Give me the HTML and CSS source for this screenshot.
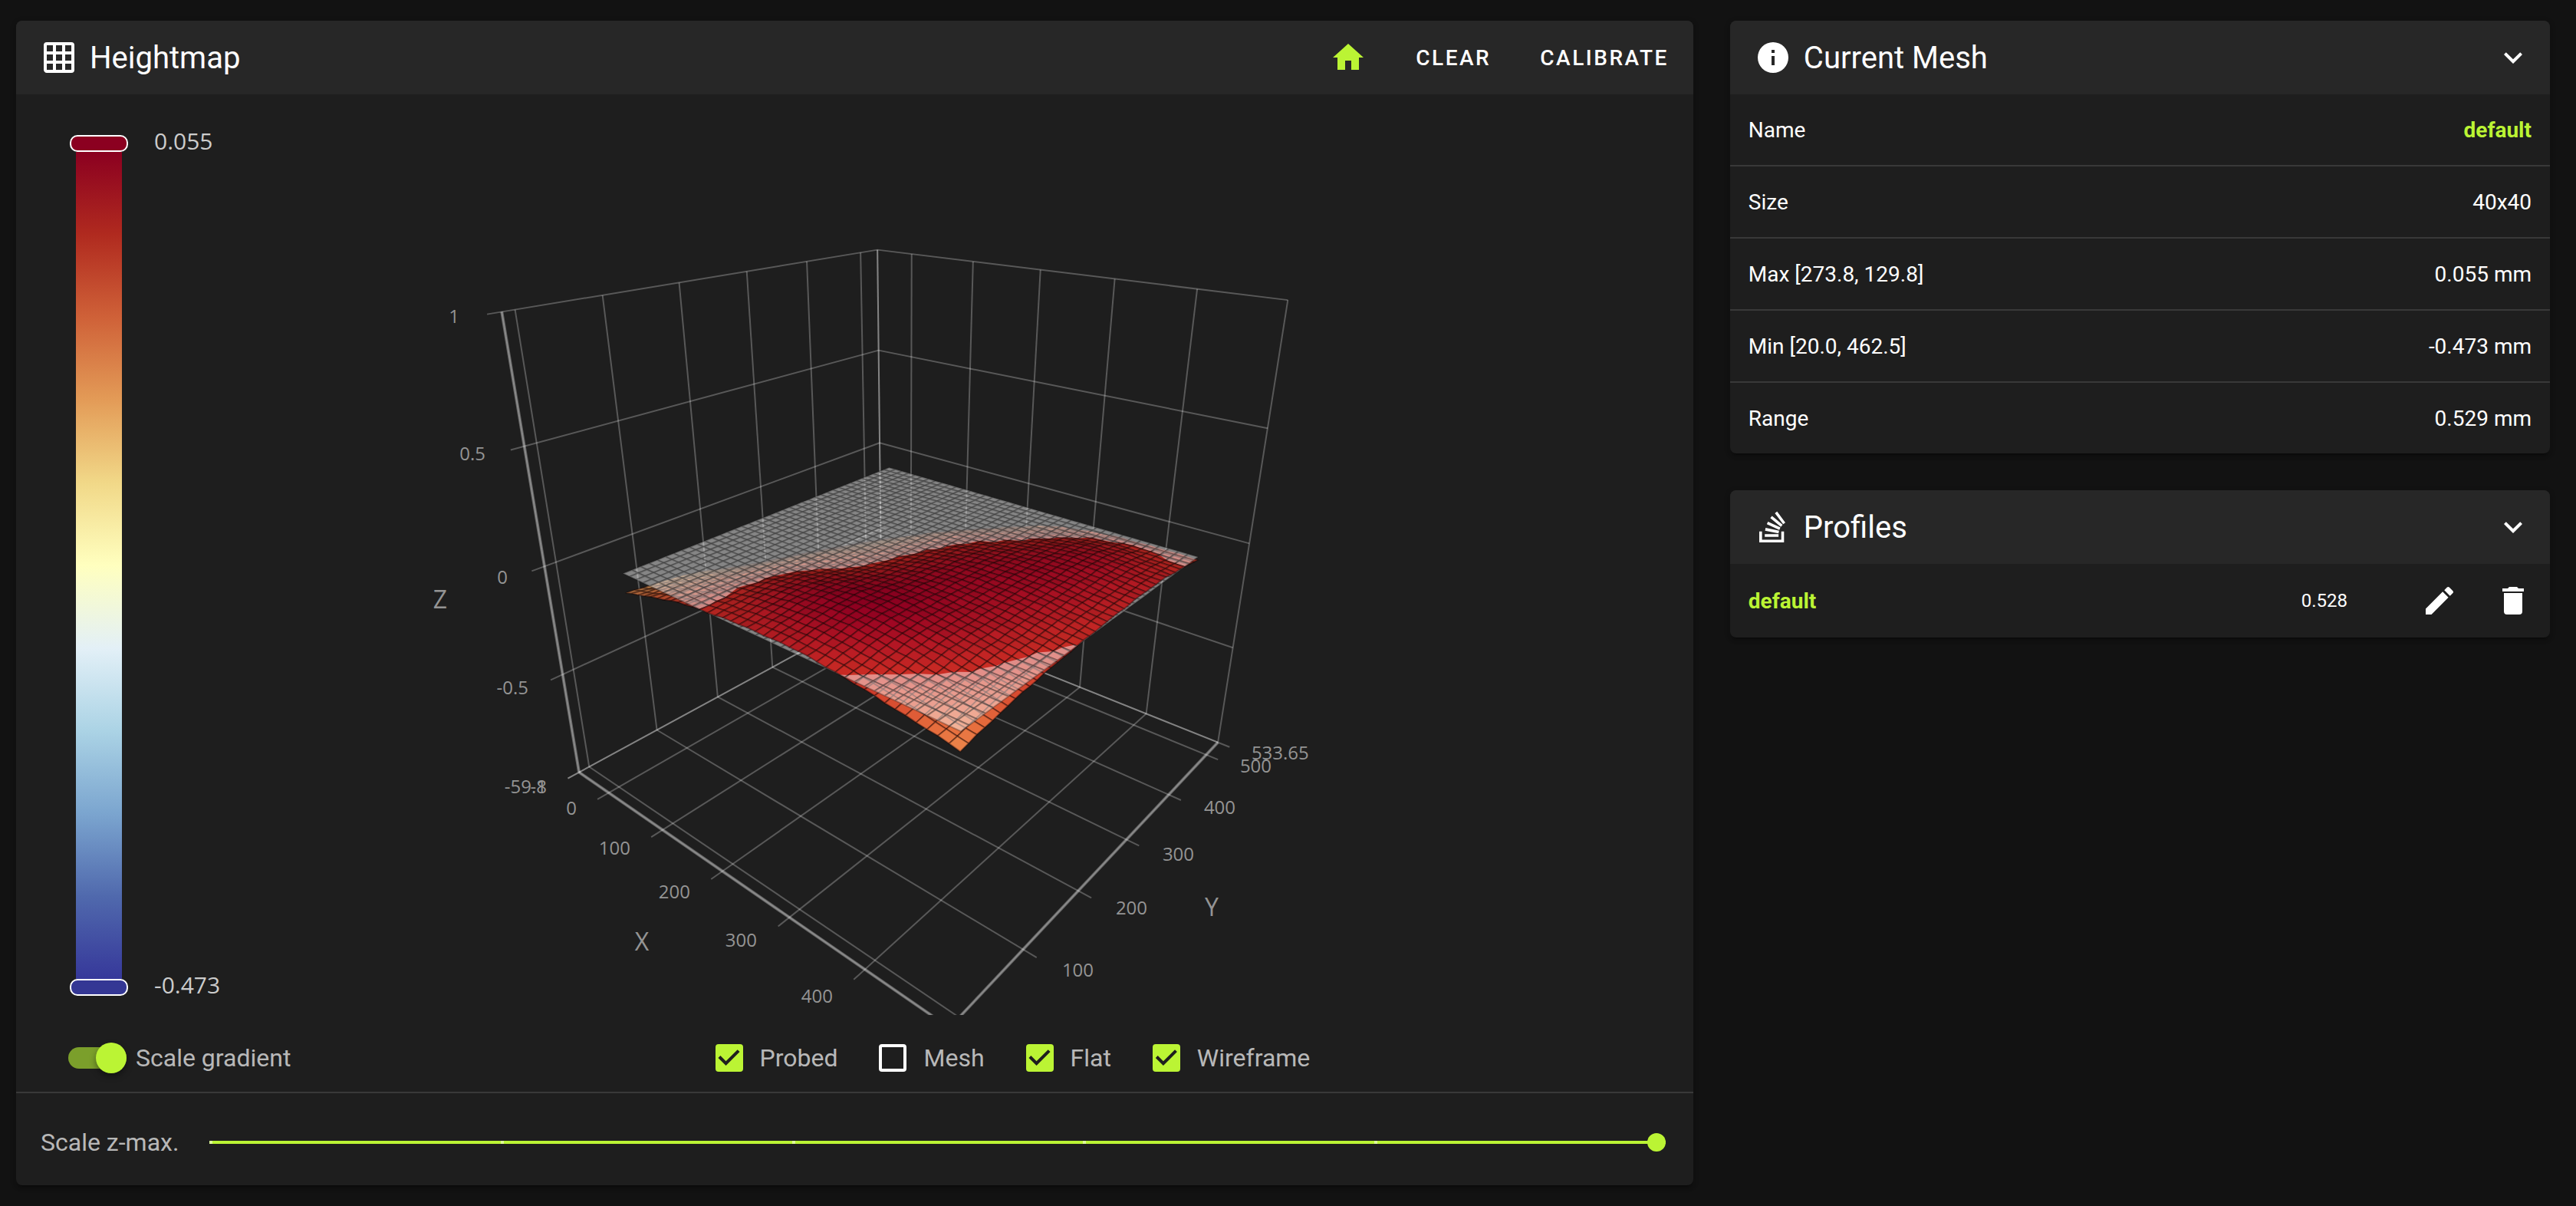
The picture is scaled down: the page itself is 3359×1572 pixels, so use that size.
FILE: index.html
```html
<!DOCTYPE html>
<html lang="en">
<head>
  <meta charset="UTF-8">
  <meta name="viewport" content="width=device-width, initial-scale=1">
  <title>Heightmap</title>
  <link rel="stylesheet" href="styles.css">
</head>
<body>
  <main class="page">
    <section class="card">
      <header class="card-header">
        <svg class="icon" viewBox="0 0 24 24"><path d="M10,4V8H14V4H10M16,4V8H20V4H16M16,10V14H20V10H16M16,16V20H20V16H16M14,20V16H10V20H14M8,20V16H4V20H8M8,14V10H4V14H8M8,8V4H4V8H8M10,14H14V10H10V14M4,2H20A2,2 0 0,1 22,4V20A2,2 0 0,1 20,22H4C2.92,22 2,21.1 2,20V4A2,2 0 0,1 4,2Z"/></svg>
        <h2>Heightmap</h2>
        <div class="toolbar">
          <button class="btn btn-home" type="button" aria-label="Home all">
            <svg class="icon" viewBox="0 0 24 24"><path d="M10,20V14H14V20H19V12H22L12,3L2,12H5V20H10Z"/></svg>
          </button>
          <button class="btn" type="button">CLEAR</button>
          <button class="btn" type="button">CALIBRATE</button>
        </div>
      </header>

      <div class="chart">
        <div class="legend">
          <div class="legend-scale">
            <span class="handle handle-max"></span>
            <span class="legend-bar"></span>
            <span class="handle handle-min"></span>
          </div>
          <div class="legend-labels">
            <span>0.055</span>
            <span>-0.473</span>
          </div>
        </div>
        <svg class="plot" id="plot" viewBox="0 0 1887 1200" role="img" aria-label="Bed mesh"></svg>
      </div>

      <div class="options">
        <label class="option option-switch">
          <input class="switch" type="checkbox" checked>
          Scale gradient
        </label>
        <div class="option-group">
          <label class="option"><input class="check" type="checkbox" checked>Probed</label>
          <label class="option"><input class="check" type="checkbox">Mesh</label>
          <label class="option"><input class="check" type="checkbox" checked>Flat</label>
          <label class="option"><input class="check" type="checkbox" checked>Wireframe</label>
        </div>
      </div>

      <div class="scale-row">
        <label for="zmax">Scale z-max.</label>
        <input class="slider" id="zmax" type="range" min="0" max="5" step="1" value="5">
      </div>
    </section>

    <aside class="side">
      <section class="card">
        <header class="card-header">
          <svg class="icon" viewBox="0 0 24 24"><path fill-rule="evenodd" d="M13,9H11V7H13V9M13,17H11V11H13V17M12,2A10,10 0 0,0 2,12A10,10 0 0,0 12,22A10,10 0 0,0 22,12A10,10 0 0,0 12,2Z"/></svg>
          <h2>Current Mesh</h2>
          <button class="icon-btn push" type="button" aria-label="Collapse current mesh">
            <svg class="icon" viewBox="0 0 24 24"><path d="M7.41,8.58L12,13.17L16.59,8.58L18,10L12,16L6,10L7.41,8.58Z"/></svg>
          </button>
        </header>
        <table class="mesh-table">
          <tbody>
            <tr><th scope="row">Name</th><td class="accent">default</td></tr>
            <tr><th scope="row">Size</th><td>40x40</td></tr>
            <tr><th scope="row">Max [273.8, 129.8]</th><td>0.055 mm</td></tr>
            <tr><th scope="row">Min [20.0, 462.5]</th><td>-0.473 mm</td></tr>
            <tr><th scope="row">Range</th><td>0.529 mm</td></tr>
          </tbody>
        </table>
      </section>

      <section class="card">
        <header class="card-header">
          <svg class="icon" viewBox="0 0 24 24"><path d="M17.36,20.2V14.82H19.15V22H3V14.82H4.8V20.2H17.36M6.77,14.32L7.14,12.56L15.93,14.41L15.56,16.17L6.77,14.32M7.93,10.11L8.69,8.5L16.83,12.28L16.07,13.9L7.93,10.11M10.19,6.12L11.34,4.74L18.24,10.5L17.09,11.87L10.19,6.12M14.64,1.87L20,9.08L18.56,10.15L13.2,2.94L14.64,1.87M6.59,18.41V16.61H15.57V18.41H6.59Z"/></svg>
          <h2>Profiles</h2>
          <button class="icon-btn push" type="button" aria-label="Collapse profiles">
            <svg class="icon" viewBox="0 0 24 24"><path d="M7.41,8.58L12,13.17L16.59,8.58L18,10L12,16L6,10L7.41,8.58Z"/></svg>
          </button>
        </header>
        <div class="profile">
          <span class="accent">default</span>
          <span class="profile-range push">0.528</span>
          <button class="icon-btn" type="button" aria-label="Rename profile">
            <svg class="icon" viewBox="0 0 24 24"><path d="M20.71,7.04C21.1,6.65 21.1,6 20.71,5.63L18.37,3.29C18,2.9 17.35,2.9 16.96,3.29L15.12,5.12L18.87,8.87M3,17.25V21H6.75L17.81,9.93L14.06,6.18L3,17.25Z"/></svg>
          </button>
          <button class="icon-btn" type="button" aria-label="Delete profile">
            <svg class="icon" viewBox="0 0 24 24"><path d="M19,4H15.5L14.5,3H9.5L8.5,4H5V6H19M6,19A2,2 0 0,0 8,21H16A2,2 0 0,0 18,19V7H6V19Z"/></svg>
          </button>
        </div>
      </section>
    </aside>
  </main>
  <script src="heightmap.js"></script>
</body>
</html>
```
FILE: styles.css
```css
* {
  box-sizing: border-box;
}

body {
  margin: 0;
  background: #121212;
  color: #fff;
  font-family: Roboto, sans-serif;
  font-size: 28px;
}

.page {
  display: grid;
  grid-template-columns: 45fr 22fr;
  align-items: start;
  gap: 48px;
  padding: 27px 34px 27px 21px;
}

.side {
  display: grid;
  gap: 48px;
}

.card {
  min-width: 0;
  overflow: hidden;
  background: #1e1e1e;
  border-radius: 8px;
  box-shadow: 0 6px 2px -4px rgba(0, 0, 0, 0.2), 0 4px 4px rgba(0, 0, 0, 0.14), 0 2px 10px rgba(0, 0, 0, 0.12);
}

.card-header {
  display: flex;
  align-items: center;
  gap: 16px;
  height: 96px;
  padding: 0 24px 0 32px;
  background: #272727;
}

h2 {
  margin: 0;
  font-size: 40px;
  font-weight: 400;
}

.icon {
  display: block;
  flex: none;
  width: 48px;
  height: 48px;
  fill: currentColor;
}

.toolbar {
  display: flex;
  height: 100%;
  margin-left: auto;
}

.btn {
  padding: 0 32px;
  border: 0;
  background: none;
  color: #fff;
  font: 500 28px Roboto, sans-serif;
  letter-spacing: 0.09em;
  cursor: pointer;
}

.btn:last-child {
  padding-right: 8px;
}

.btn-home,
.accent {
  color: #bbf434;
}

.btn:hover,
.icon-btn:hover {
  opacity: 0.8;
}

.icon-btn {
  padding: 0;
  border: 0;
  background: none;
  color: #fff;
  cursor: pointer;
}

.push {
  margin-left: auto;
}

/* chart */
.chart {
  display: flex;
  height: 1200px;
}

.legend {
  display: flex;
  flex: 0 0 300px;
  gap: 34px;
  padding: 53px 0 25px 70px;
}

.legend-scale {
  display: flex;
  flex-direction: column;
  align-items: center;
  width: 76px;
}

.legend-bar {
  flex: 1;
  width: 60px;
  background: linear-gradient(#8b0020, #b02a1f, #cf6138, #e39b57, #f1d888, #ffffbf, #e3f0f7, #abd3e5, #7ba5cf, #5069ad, #36389a);
}

.handle {
  width: 76px;
  height: 22px;
  border: 2px solid #fff;
  border-radius: 10px;
}

.handle-max {
  background: #8b0020;
}

.handle-min {
  background: #343794;
}

.legend-labels {
  display: flex;
  flex-direction: column;
  justify-content: space-between;
  padding-bottom: 6px;
  color: #ccc;
  font-family: "Open Sans", sans-serif;
  font-size: 30px;
  line-height: 16px;
}

.plot {
  flex: 1;
  min-width: 0;
  height: 100%;
}

.plot text {
  fill: #949494;
  font: 24px "Open Sans", sans-serif;
}

.plot .axis-name {
  font-size: 32px;
  text-anchor: middle;
}

.grid-line {
  stroke: rgba(255, 255, 255, 0.26);
  stroke-width: 2;
}

.axis-line {
  stroke: rgba(255, 255, 255, 0.3);
  stroke-width: 4;
}

.flat {
  fill: rgba(255, 255, 255, 0.46);
}

.flat-wire {
  fill: none;
  stroke: rgba(30, 30, 30, 0.3);
  stroke-width: 2;
}

.mesh-wire {
  fill: none;
  stroke: rgba(20, 0, 0, 0.36);
  stroke-width: 2;
}

/* options below the chart */
.options {
  display: grid;
  grid-template-columns: 412px 1fr;
  padding: 36px 0 24px;
  border-bottom: 2px solid #393939;
}

.option-group {
  display: flex;
  justify-content: center;
  gap: 54px;
}

.option,
.scale-row {
  display: flex;
  align-items: center;
  height: 40px;
  color: rgba(255, 255, 255, 0.7);
  font-size: 32px;
}

.option {
  gap: 22px;
  cursor: pointer;
}

.option-switch {
  gap: 12px;
  padding-left: 68px;
}

.switch {
  position: relative;
  width: 76px;
  height: 28px;
  margin: 0;
  appearance: none;
  border-radius: 14px;
  background: #7b9f2b;
  cursor: pointer;
}

.switch::before {
  content: "";
  position: absolute;
  top: -6px;
  left: 0;
  width: 40px;
  height: 40px;
  border-radius: 50%;
  background: #bbf434;
  box-shadow: 0 4px 8px rgba(0, 0, 0, 0.4);
}

.switch:checked::before {
  left: 36px;
}

.check {
  width: 36px;
  height: 36px;
  margin: 0;
  appearance: none;
  border: 4px solid #fff;
  border-radius: 4px;
  cursor: pointer;
}

.check:checked {
  border: 0;
  background: #bbf434;
}

.check:checked::before {
  content: "";
  display: block;
  height: 36px;
  background: #1e1e1e;
  clip-path: polygon(39% 78%, 11% 50%, 19% 42%, 39% 62%, 81% 20%, 89% 28%);
}

.scale-row {
  gap: 40px;
  height: 120px;
  padding: 8px 36px 0 32px;
}

.slider {
  flex: 1;
  height: 24px;
  margin: 0;
  appearance: none;
  background:
    repeating-linear-gradient(90deg, #def99a 0 4px, transparent 4px 20%) 0 center / 100% 4px no-repeat,
    linear-gradient(#bbf434, #bbf434) 0 center / 100% 4px no-repeat;
}

.slider::-webkit-slider-thumb {
  width: 24px;
  height: 24px;
  appearance: none;
  border-radius: 50%;
  background: #bbf434;
}

/* side cards */
.mesh-table {
  width: 100%;
  border-spacing: 0;
}

.mesh-table th,
.mesh-table td {
  height: 94px;
  padding: 0 24px;
  border-bottom: 2px solid #393939;
  font-weight: 400;
  text-align: left;
}

.mesh-table td {
  text-align: right;
}

.mesh-table tr:last-child > * {
  height: 92px;
  border-bottom: 0;
}

.mesh-table .accent,
.profile .accent {
  font-weight: 700;
}

.profile {
  display: flex;
  align-items: center;
  gap: 48px;
  height: 96px;
  padding: 0 24px;
}

.profile-range {
  margin-right: 48px;
  font-size: 24px;
}
```
FILE: heightmap.js
```js
const NS = "http://www.w3.org/2000/svg";
const plot = document.getElementById("plot");

const axes = {
  x: { min: -59.8, max: 498.8, ticks: [0, 100, 200, 300, 400], half: 1.01 },
  y: { min: -14, max: 533.65, ticks: [0, 100, 200, 300, 400, 500], half: 0.99 },
  z: { min: -1, max: 1, ticks: [-0.5, 0, 0.5], half: 0.984 }
};

const tickLength = 0.055;
const labelDistance = 0.155;

// orbit camera around the centre of the box
const camera = { alpha: 24.8, beta: 40, distance: 4, focal: 1303, cx: 860, cy: 600 };
const rad = Math.PI / 180;
const sinA = Math.sin(camera.alpha * rad), cosA = Math.cos(camera.alpha * rad);
const sinB = Math.sin(camera.beta * rad), cosB = Math.cos(camera.beta * rad);

function unit(axis, v) {
  const a = axes[axis];
  return ((v - a.min) / (a.max - a.min) * 2 - 1) * a.half;
}

function projectUnit(x, y, z) {
  const right = x * cosB + y * sinB;
  const ahead = y * cosB - x * sinB;
  const depth = camera.distance + ahead * cosA - z * sinA;
  return [
    camera.cx + camera.focal * right / depth,
    camera.cy - camera.focal * (z * cosA + ahead * sinA) / depth
  ];
}

function project(x, y, z, dx = 0, dy = 0) {
  return projectUnit(unit("x", x) + dx, unit("y", y) + dy, unit("z", z));
}

function add(name, attrs, text) {
  const el = document.createElementNS(NS, name);
  for (const key in attrs) el.setAttribute(key, attrs[key]);
  if (text !== undefined) el.textContent = text;
  plot.appendChild(el);
}

function line(a, b, cls) {
  add("line", { x1: a[0].toFixed(1), y1: a[1].toFixed(1), x2: b[0].toFixed(1), y2: b[1].toFixed(1), class: cls });
}

function label(p, text, anchor) {
  if (p[1] > 1190) return;
  add("text", { x: Math.round(p[0]), y: Math.round(p[1]) + 5, "text-anchor": anchor }, text);
}

function drawBox() {
  const { x, y, z } = axes;
  const all = a => [a.min, ...a.ticks, a.max];

  all(x).forEach(v => {
    line(project(v, y.min, z.min, 0, -tickLength), project(v, y.max, z.min), "grid-line");
    line(project(v, y.max, z.min), project(v, y.max, z.max), "grid-line");
  });
  all(y).forEach(v => {
    line(project(x.min, v, z.min), project(x.max, v, z.min, tickLength), "grid-line");
    line(project(x.min, v, z.min), project(x.min, v, z.max), "grid-line");
  });
  all(z).forEach(v => {
    line(project(x.min, y.min, v, 0, -tickLength), project(x.min, y.max, v), "grid-line");
    line(project(x.min, y.max, v), project(x.max, y.max, v), "grid-line");
  });

  line(project(x.min, y.min, z.min), project(x.max, y.min, z.min), "axis-line");
  line(project(x.max, y.min, z.min), project(x.max, y.max, z.min), "axis-line");
  line(project(x.min, y.min, z.min), project(x.min, y.min, z.max), "axis-line");
}

function drawLabels() {
  const { x, y, z } = axes;
  [x.min, ...x.ticks].forEach(v => label(project(v, y.min, z.min, 0, -labelDistance), v, "end"));
  [...y.ticks, y.max].forEach(v => label(project(x.max, v, z.min, labelDistance), v, "start"));
  [z.min, ...z.ticks, z.max].forEach(v => label(project(x.min, y.min, v, 0, -labelDistance), v, "end"));

  const names = {
    X: projectUnit(0, -y.half - 0.42, -z.half),
    Y: projectUnit(x.half + 0.42, 0, -z.half),
    Z: projectUnit(-x.half, -y.half - 0.42, 0)
  };
  for (const n in names) {
    add("text", { x: Math.round(names[n][0]), y: Math.round(names[n][1]) + 5, class: "axis-name" }, n);
  }
}

// probed heights, rows from y = 30 to y = 462.5, columns from x = 20 to x = 470
const probed = [
  [-0.085, -0.016, 0.012, 0.014, -0.020, -0.070],
  [-0.120, -0.028, 0.035, 0.054, 0.024, -0.026],
  [-0.195, -0.062, 0.000, 0.045, 0.034, -0.002],
  [-0.255, -0.120, -0.025, 0.032, 0.042, 0.012],
  [-0.330, -0.185, -0.062, -0.002, 0.035, 0.015],
  [-0.473, -0.300, -0.150, -0.050, -0.014, -0.012]
];
const size = 40;

function cubic(v, t) {
  const i = Math.min(Math.floor(t), v.length - 2);
  const f = t - i;
  const b = v[i], c = v[i + 1];
  const a = i > 0 ? v[i - 1] : 2 * b - c;
  const d = i + 2 < v.length ? v[i + 2] : 2 * c - b;
  return b + 0.5 * f * (c - a + f * (2 * a - 5 * b + 4 * c - d + f * (3 * (b - c) + d - a)));
}

function height(i, j) {
  const tx = i / (size - 1) * 5, ty = j / (size - 1) * 5;
  const ripple = 0.0018 * Math.sin(i * 1.9) * Math.cos(j * 1.3) + 0.0012 * Math.sin(i * 0.9 + j * 2.1);
  return cubic(probed.map(row => cubic(row, tx)), ty) + ripple;
}

const stops = [
  [54, 56, 154], [80, 105, 173], [123, 165, 207], [171, 211, 229], [227, 240, 247], [255, 255, 191],
  [245, 222, 145], [232, 168, 96], [218, 104, 58], [190, 40, 34], [145, 0, 33]
];

function colour(z, shade) {
  const t = Math.max(0, Math.min(0.9999, (z + 0.473) / 0.528)) * 10;
  const i = Math.floor(t);
  const rgb = stops[i].map((c, k) => Math.round(Math.min(255, (c + (stops[i + 1][k] - c) * (t - i)) * shade)));
  return `rgb(${rgb})`;
}

// part of a cell lying above (sign 1) or below (sign -1) the zero plane
function clip(cell, sign) {
  const out = [];
  cell.forEach((p, k) => {
    const q = cell[(k + 1) % 4];
    if (p.z * sign >= 0) out.push(p);
    if (p.z * q.z < 0) {
      const f = p.z / (p.z - q.z);
      out.push({ x: p.x + (q.x - p.x) * f, y: p.y + (q.y - p.y) * f, z: 0 });
    }
  });
  return out;
}

function drawFlat(poly) {
  if (poly.length < 3) return;
  const pts = poly.map(p => project(p.x, p.y, 0).map(n => n.toFixed(1)));
  add("path", { d: "M" + pts.join("L") + "Z", class: "flat" });
  let d = "";
  poly.forEach((p, k) => {
    const n = (k + 1) % poly.length;
    if (p.z !== 0 || poly[n].z !== 0) d += `M${pts[k]}L${pts[n]}`;
  });
  add("path", { d, class: "flat-wire" });
}

function drawSurface() {
  const points = [];
  for (let j = 0; j < size; j++) {
    points.push([]);
    for (let i = 0; i < size; i++) {
      points[j].push({ x: 20 + i * 450 / 39, y: 30 + j * 432.5 / 39, z: height(i, j) });
    }
  }
  // back to front
  for (let j = size - 2; j >= 0; j--) {
    for (let i = 0; i < size - 1; i++) {
      const cell = [points[j][i], points[j][i + 1], points[j + 1][i + 1], points[j + 1][i]];
      const mean = cell.reduce((s, p) => s + p.z, 0) / 4;
      const slope = (cell[3].z - cell[1].z) / 0.058;
      const shade = Math.max(0.74, Math.min(1.06, 0.94 + slope * 0.7));

      drawFlat(clip(cell, 1));
      const d = "M" + cell.map(p => project(p.x, p.y, p.z).map(n => n.toFixed(1))).join("L") + "Z";
      add("path", { d, fill: colour(mean, shade) });
      add("path", { d, class: "mesh-wire" });
      drawFlat(clip(cell, -1));
    }
  }
}

drawBox();
drawSurface();
drawLabels();
```
